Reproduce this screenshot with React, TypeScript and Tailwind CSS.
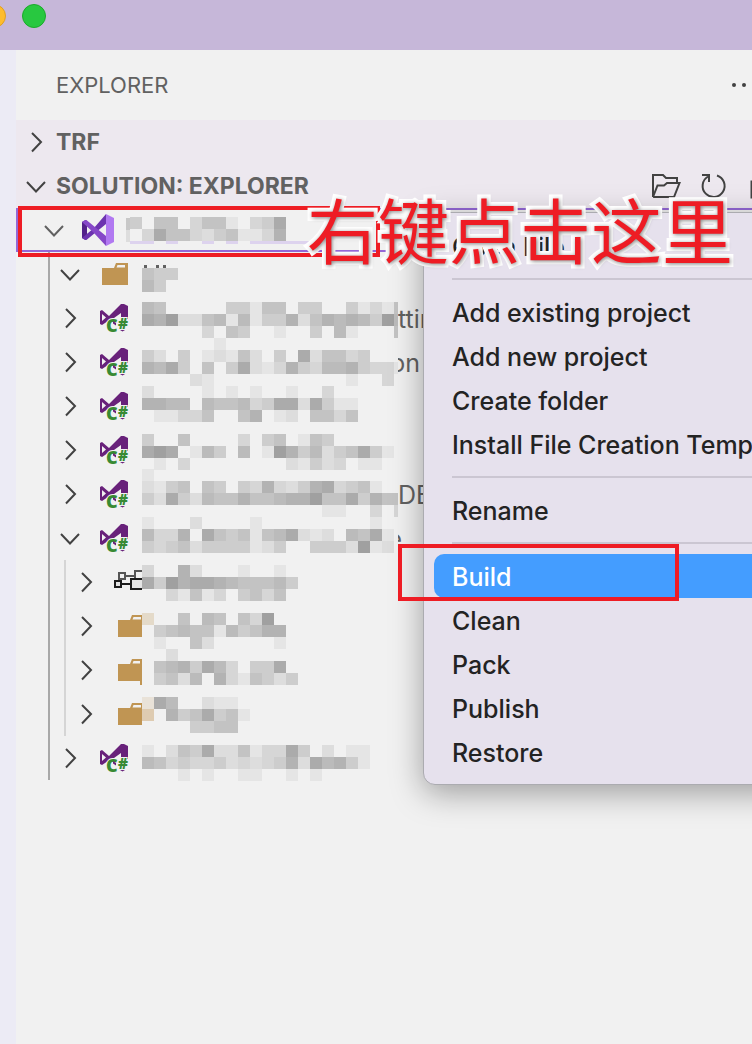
import React from 'react';

type Tile = { x: number; y: number; w: number; h: number; fill: string };

type TreeNode = {
  icon: 'csharp' | 'folder' | 'deps';
  label: string;
  tail?: string;
  tailClass?: string;
  offset: number;
  tiles: string[];
  extra?: Tile[];
  open?: boolean;
  children?: TreeNode[];
};

const CELL = 12;

// one digit per cell, 0 is blank and 9 is the darkest
const SHADES = ['none', '#e5e5e5', '#dddddd', '#d6d6d6', '#cdcdcd', '#c3c3c3', '#bbbbbb', '#b3b3b3', '#ababab', '#a0a0a0'];

const NODES: TreeNode[] = [
  {
    icon: 'folder',
    label: 'Solution folder',
    offset: 16,
    tiles: ['544', '64'],
    extra: [
      { x: 2, y: 13, w: 3, h: 3, fill: '#616161' },
      { x: 14, y: 13, w: 3, h: 3, fill: '#616161' },
      { x: 21, y: 13, w: 3, h: 3, fill: '#616161' },
    ],
    open: true,
  },
  {
    icon: 'csharp',
    label: 'Project 1',
    tail: 'ttings',
    tailClass: 'w-[26px]',
    offset: 6,
    tiles: ['6500000441550440041315', '8792256161447257676496', '0000030540010040610005'],
  },
  {
    icon: 'csharp',
    label: 'Project 2',
    tail: 'on',
    tailClass: 'w-[22px] justify-end',
    offset: -2,
    tiles: ['0000001', '4204012152040825534', '7684050482137436674331', '000021000000000001003'],
  },
  {
    icon: 'csharp',
    label: 'Project 3',
    offset: 2,
    tiles: ['2000010101001003', '776606556348828411', '011335005701205535'],
  },
  {
    icon: 'csharp',
    label: 'Project 4',
    offset: 6,
    tiles: ['4005000030450154', '898016406019746245841', '01030000000021423011'],
  },
  {
    icon: 'csharp',
    label: 'Project 5',
    tail: 'DE',
    tailClass: 'w-[26px]',
    offset: -3,
    tiles: ['1', '21450540437324783451', '4284265575567795584755', '0000000000000001100303'],
  },
  {
    icon: 'csharp',
    label: 'Project 6',
    tail: 'e',
    tailClass: 'w-1 justify-end',
    offset: 1,
    tiles: ['10002000010000000001', '633708545156821206581', '434524444124004442912'],
    open: true,
    children: [
      { icon: 'deps', label: 'Dependencies', offset: 5, tiles: ['300720001001', '8497887655564', '003151304535'] },
      {
        icon: 'folder',
        label: 'Folder 1',
        offset: 9,
        tiles: ['00050650539', '045655164577', '010052000001'],
        extra: [{ x: 0, y: 9, w: 12, h: 12, fill: '#e4dac9' }],
      },
      {
        icon: 'folder',
        label: 'Folder 2',
        offset: 1,
        tiles: ['002', '056748630448', '0452607315424'],
        extra: [{ x: -2, y: 13, w: 2, h: 24, fill: '#c09553' }],
      },
      {
        icon: 'folder',
        label: 'Folder 3',
        offset: 5,
        tiles: ['08600211', '007458451', '00004455'],
        extra: [
          { x: 0, y: 5, w: 12, h: 12, fill: '#e9e2d8' },
          { x: 0, y: 17, w: 12, h: 12, fill: '#decbb1' },
        ],
      },
    ],
  },
  {
    icon: 'csharp',
    label: 'Project 7',
    offset: 9,
    tiles: ['1025482251338402011', '6534334232347286741', '000101001100101'],
  },
];

const MENU: string[][] = [
  ['Open File'],
  ['Add existing project', 'Add new project', 'Create folder', 'Install File Creation Templates'],
  ['Rename'],
  ['Build', 'Clean', 'Pack', 'Publish', 'Restore'],
];

const Chevron: React.FC<{ open?: boolean; color?: string }> = ({ open, color = '#424242' }) => (
  <svg className="w-8 h-8 shrink-0" viewBox="0 0 32 32" fill="none" stroke={color} strokeWidth="2">
    <path d={open ? 'M7 12l9 9.500 9-9.500' : 'M12 7l9 9-9 9.500'} />
  </svg>
);

const VisualStudioIcon = () => (
  <svg className="w-8 h-8 shrink-0" viewBox="0 0 32 32">
    <path fill="#52218a" d="M0 8l4-2 1 1v18l-1 1-4-2z" />
    <path fill="#6c33af" d="M24 0v10L5 25.500 3 26l-3-2 12-10z" />
    <path fill="#8647c8" d="M0 8l3-2 2 .5L24 22v10L12 19z" />
    <path fill="#b179f1" d="M24 0l8 4v24l-8 4z" />
  </svg>
);

const CSharpIcon = () => (
  <svg className="w-8 h-8 shrink-0 overflow-visible" viewBox="0 0 32 32">
    <path
      fill="#68217a"
      fillRule="evenodd"
      d="M2 9l2-1 7 6L23 2l3 0 4 2v13h-7v-6l-7 5-3 1-9 6-2-1zM4 12v7l4-3.500z"
    />
    <path fill="#68217a" d="M22 28h5l-2.500 1.500z" />
    <g fill="#388a34" stroke="#f1f1f1" strokeWidth="2" paintOrder="stroke" fontFamily="Open Sans, sans-serif" fontWeight="800">
      <text x="8" y="30" fontSize="18">C</text>
      <text x="20" y="27" fontSize="15">#</text>
    </g>
    <path fill="#68217a" d="M15 19l3 2v2.500l-3-2z" />
  </svg>
);

const FolderIcon: React.FC<{ nested?: boolean }> = ({ nested }) => (
  <svg className={nested ? 'w-7 h-8 shrink-0' : 'w-8 h-8 shrink-0'} viewBox={nested ? '0 0 28 32' : '0 0 32 32'}>
    <path fill="#c09553" d="M4 10h12l2-5h12v22H4zM19.500 7l-1 2.500H27V7z" fillRule="evenodd" />
  </svg>
);

const DepsIcon = () => (
  <svg className="w-7 h-8 shrink-0" viewBox="0 0 28 32" fill="none" strokeWidth="2">
    <g stroke="#555">
      <path d="M5 7h6v6H5zM11 10h10M28 5h-7v8h7" />
    </g>
    <g stroke="#1c1c1c">
      <path d="M1 15h6v6H1zM7 18h10M28 13H17v10h11" fill="#e4e4e4" />
    </g>
  </svg>
);

const Mosaic: React.FC<{ node: TreeNode }> = ({ node }) => (
  <svg className="w-[256px] h-11 shrink-0 overflow-visible" viewBox="0 0 256 44" shapeRendering="crispEdges" role="img" aria-label={node.label}>
    {node.extra?.map((t, i) => (
      <rect key={i} x={t.x} y={t.y} width={t.w} height={t.h} fill={t.fill} />
    ))}
    {node.tiles.map((line, r) =>
      line.split('').map((d, c) => (
        <rect
          key={`${r}-${c}`}
          x={c * CELL}
          y={node.offset + r * CELL}
          width={c === 21 ? 4 : CELL}
          height={CELL}
          fill={SHADES[Number(d)]}
        />
      ))
    )}
  </svg>
);

const TreeItem: React.FC<{ node: TreeNode; nested?: boolean }> = ({ node, nested }) => (
  <li>
    <div className="flex items-center h-11 pl-1 whitespace-nowrap">
      <Chevron open={node.open} />
      <span className={nested ? 'flex pl-3' : 'flex px-3'}>
        {node.icon === 'csharp' && <CSharpIcon />}
        {node.icon === 'folder' && <FolderIcon nested={nested} />}
        {node.icon === 'deps' && <DepsIcon />}
      </span>
      <Mosaic node={node} />
      {node.tail && (
        <span className={`flex overflow-hidden pt-[2px] text-[25px] leading-8 text-[#616161] ${node.tailClass}`}>{node.tail}</span>
      )}
    </div>
    {node.children && (
      <ul className="ml-[14px] border-l-2 border-[#d5d5d5]">
        {node.children.map((child) => (
          <TreeItem key={child.label} node={child} nested />
        ))}
      </ul>
    )}
  </li>
);

const RootRow = () => {
  const top = '4055035510348';
  const bottom = '0385532451137';
  return (
    <div className="flex items-center h-11 border-2 border-r-0 border-[#9468d6] pl-5">
      <Chevron open color="#616161" />
      <span className="flex px-3">
        <VisualStudioIcon />
      </span>
      <svg className="w-[254px] h-7 shrink-0" viewBox="0 0 254 28" shapeRendering="crispEdges" role="img" aria-label="Solution">
        <rect x="0" y="2" width="4" height="12" fill="#c8c8c8" />
        <rect x="0" y="14" width="4" height="12" fill="#dddddd" />
        <path fill="#ddd3ee" d="M4 25h24v3H4zM40 25h12v3H40zM76 25h12v3H76zM100 25h12v3h-12zM124 25h70v3h-70z" />
        {[top, bottom].map((line, r) =>
          line.split('').map((d, c) => (
            <rect key={`${r}-${c}`} x={4 + c * CELL} y={1 + r * CELL} width={CELL} height={CELL} fill={SHADES[Number(d)]} />
          ))
        )}
      </svg>
    </div>
  );
};

const SectionHeader: React.FC<{ title: string; open?: boolean; children?: React.ReactNode }> = ({ title, open, children }) => (
  <div className="flex items-center h-11 pl-1 bg-[#ede8ef]">
    <button type="button" aria-expanded={!!open} className="flex items-center gap-1 text-[23px] leading-7 font-bold text-[#616161]">
      <Chevron open={open} />
      {title}
    </button>
    {children}
  </div>
);

const SolutionActions = () => (
  <div className="ml-auto -mr-[26px] flex gap-4 text-[#424242]">
    <button type="button" aria-label="Open solution">
      <svg className="w-8 h-8" viewBox="0 0 32 32" fill="none" stroke="currentColor" strokeWidth="2">
        <path d="M3 27V5h10l3 3h11v5M3 27h21l5.500-14H17l-3 2.500H7.500L3 27" />
      </svg>
    </button>
    <button type="button" aria-label="Refresh">
      <svg className="w-8 h-8" viewBox="0 0 32 32" fill="none" stroke="currentColor" strokeWidth="2">
        <path d="M4 5h7v7M10 6.500A11 11 0 1 0 19 5.500" />
      </svg>
    </button>
    <button type="button" aria-label="Collapse all">
      <svg className="w-8 h-8" viewBox="0 0 32 32" fill="none" stroke="currentColor" strokeWidth="3">
        <rect x="6" y="12" width="18" height="15" />
      </svg>
    </button>
  </div>
);

const ContextMenu = () => (
  <div
    role="menu"
    className="absolute left-[423px] -right-10 top-[212px] pt-[11px] pb-[10px] rounded-[12px] border border-[#ababb0] bg-[#e6e1ed] shadow-[0_8px_32px_rgba(0,0,0,0.35)]"
  >
    {MENU.map((group, i) => (
      <div key={group[0]}>
        {i > 0 && (
          <div className="h-[22px] ml-7 flex items-center">
            <div className="h-[2px] w-full bg-[#cbc6d2]" />
          </div>
        )}
        {group.map((item) => (
          <button
            key={item}
            type="button"
            role="menuitem"
            className={`flex items-center w-full h-11 pl-7 pt-[2px] text-[25px] leading-8 font-medium whitespace-nowrap ${
              item === 'Build' ? 'relative text-white' : 'text-[#232323]'
            }`}
          >
            {item === 'Build' && <span className="absolute inset-y-0 left-[10px] right-0 rounded-[10px] bg-[#449dff]" />}
            <span className="relative">{item}</span>
          </button>
        ))}
      </div>
    ))}
  </div>
);

export default function App() {
  return (
    <div className="relative flex flex-col min-h-screen overflow-hidden bg-[#f1f1f1] font-['Inter','Noto_Sans_CJK_SC',sans-serif]">
      <header className="flex h-[50px] bg-[#c6b7d9] pt-1">
        <span className="-ml-[18px] w-6 h-6 shrink-0 rounded-full border border-[#dfa023] bg-[#febc2e]" />
        <span className="ml-4 w-6 h-6 shrink-0 rounded-full border border-[#1aab29] bg-[#28c840]" />
      </header>

      <div className="flex flex-1">
        <div className="w-4 shrink-0 bg-[#ecebf5]" />
        <aside className="flex-1 min-w-0">
          <div className="flex items-center justify-between h-[70px] pl-10">
            <h2 className="text-[22px] leading-7 text-[#616161]">EXPLORER</h2>
            <button type="button" aria-label="More actions" className="-mr-2">
              <svg className="w-8 h-8" viewBox="0 0 32 32" fill="#424242">
                <circle cx="6" cy="16" r="2" />
                <circle cx="16" cy="16" r="2" />
                <circle cx="26" cy="16" r="2" />
              </svg>
            </button>
          </div>
          <SectionHeader title="TRF" />
          <SectionHeader title="SOLUTION: EXPLORER" open>
            <SolutionActions />
          </SectionHeader>
          <RootRow />
          <ul className="ml-8 border-l-2 border-[#a8a8a8]">
            {NODES.map((node) => (
              <TreeItem key={node.label} node={node} />
            ))}
          </ul>
        </aside>
      </div>

      <ContextMenu />

      <div className="absolute left-[18px] top-[206px] w-[362px] h-[51px] border-4 border-[#ee1c24]" />
      <div className="absolute left-[398px] top-[544px] w-[281px] h-[57px] border-4 border-[#ee1c24]" />
      <p className="absolute left-[307px] top-[187px] whitespace-nowrap text-[71px] leading-[80px] font-normal text-[#ee1c24] font-['Noto_Sans_CJK_SC',sans-serif] [paint-order:stroke_fill] [-webkit-text-stroke:8px_white] [text-shadow:1px_1px_4px_rgba(0,0,0,0.5)]">
        右键点击这里
      </p>
    </div>
  );
}
